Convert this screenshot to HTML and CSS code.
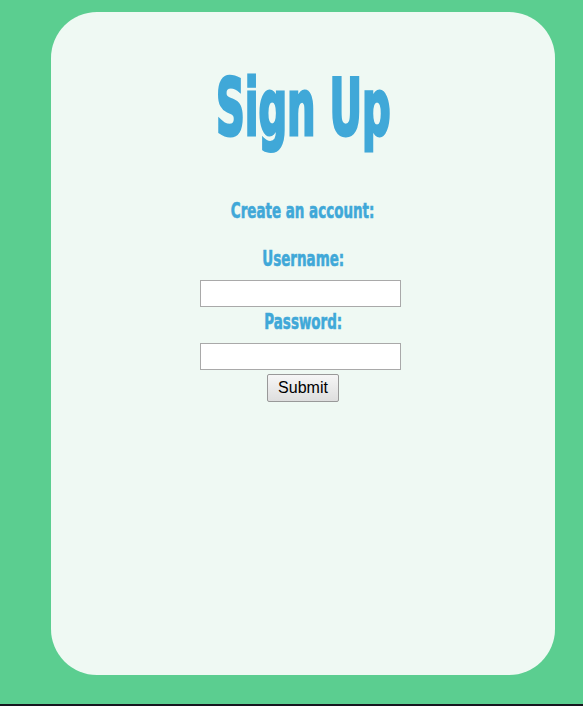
FILE: index.html
```html
<!DOCTYPE html>
<html>
<head>
<meta charset="utf-8">
<link rel="stylesheet" href="styles.css">
</head>
<body>
<div class="page">
  <div class="card">
    <h1 class="title">Sign Up</h1>
    <form class="form">
      <p class="lead">Create an account:</p>
      <label class="label" for="u">Username:</label>
      <input class="field" id="u" type="text">
      <label class="label label-pw" for="p">Password:</label>
      <input class="field" id="p" type="password">
      <button class="submit" type="button">Submit</button>
    </form>
  </div>
</div>
</body>
</html>
```

FILE: styles.css
```css
html {
  background: #16161e;
}
body {
  margin: 0;
}
.page {
  height: 704px;
  background: #5bce90;
  padding: 12px 28px 0 51px;
  box-sizing: border-box;
}
.card {
  height: 663px;
  background: #eff9f3;
  border-radius: 46px;
  display: flex;
  flex-direction: column;
  align-items: center;
}
.title {
  margin: 56px 0 0;
  font-family: "DejaVu Sans Condensed", "Liberation Sans", sans-serif;
  font-weight: bold;
  font-size: 78px;
  line-height: 80px;
  color: #40a8d8;
  -webkit-text-stroke: 3px #40a8d8;
  transform: scaleX(0.57);
}
.form {
  display: flex;
  flex-direction: column;
  align-items: center;
  margin-top: 50px;
}
.lead, .label {
  font-family: "DejaVu Sans Condensed", "Liberation Sans", sans-serif;
  font-weight: bold;
  font-size: 22px;
  line-height: 26px;
  color: #40a8d8;
  margin: 0;
  transform: scaleX(0.68);
  -webkit-text-stroke: 0.6px #40a8d8;
}
.label {
  margin-top: 22px;
  margin-bottom: 8px;
}
.label-pw {
  margin-top: 2px;
}
.field {
  width: 201px;
  height: 27px;
  box-sizing: border-box;
  border: 1px solid #a9a9a9;
  background: #fff;
  margin: 0 4px 0 0;
}
.submit {
  margin-top: 4px;
  width: 72px;
  height: 28px;
  font-family: "Liberation Sans", Arial, sans-serif;
  font-size: 16px;
  border: 1px solid #999;
  border-radius: 2px;
  background: linear-gradient(#f6f6f6, #dedede);
  color: #000;
  padding: 0;
}
```
